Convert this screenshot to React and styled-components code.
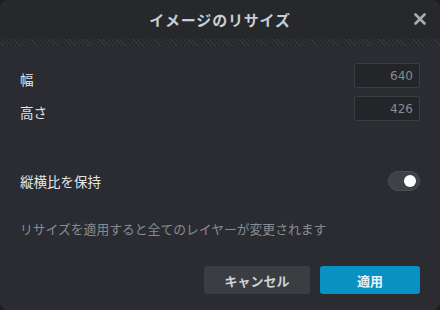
import React, { useState } from 'react';
import styled, { createGlobalStyle } from 'styled-components';

const GlobalStyle = createGlobalStyle`
  html, body {
    margin: 0;
    padding: 0;
    background: #1c1d20;
    font-family: 'Noto Sans CJK JP', 'Noto Sans', sans-serif;
  }
`;

const Dialog = styled.div`
  width: 440px;
  height: 310px;
  background: #2a2c31;
  border-radius: 8px;
  overflow: hidden;
  display: flex;
  flex-direction: column;
  box-sizing: border-box;
`;

const Header = styled.div`
  height: 39px;
  background: #26282c;
  display: flex;
  align-items: center;
  justify-content: center;
  position: relative;
`;

const Title = styled.h2`
  margin: 0;
  font-size: 15px;
  font-weight: 700;
  color: #c8ced6;
  letter-spacing: 0.8px;
`;

const CloseButton = styled.button`
  position: absolute;
  right: 11px;
  top: 10px;
  width: 18px;
  height: 18px;
  padding: 0;
  border: none;
  background: none;
  cursor: pointer;
  display: flex;
  align-items: center;
  justify-content: center;
`;

const Hatch = styled.div`
  height: 7px;
  background: repeating-linear-gradient(
    45deg,
    #26282c 0px,
    #26282c 2px,
    #34373c 2px,
    #34373c 3px
  );
`;

const Body = styled.div`
  flex: 1;
  display: flex;
  flex-direction: column;
  padding: 17px 20px 16px 20px;
`;

const FieldRow = styled.div`
  display: flex;
  align-items: flex-start;
  justify-content: space-between;
  margin-bottom: 8px;
`;

const Label = styled.span`
  font-size: 13.5px;
  line-height: 18px;
  color: #e4e6ea;
  padding-top: ${(p) => (p.low ? '7px' : '0')};
`;

const NumberInput = styled.input`
  width: 66px;
  height: 25px;
  box-sizing: border-box;
  background: #232529;
  border: 1px solid #3a3d42;
  border-radius: 2px;
  color: #878c93;
  font-family: 'DejaVu Sans', sans-serif;
  font-size: 12px;
  text-align: right;
  padding: 0 6px;
  outline: none;
`;

const ToggleRow = styled(FieldRow)`
  align-items: center;
  margin-top: 42px;
  margin-bottom: 0;
`;

const Toggle = styled.button`
  width: 32px;
  height: 20px;
  padding: 0;
  border-radius: 10px;
  border: 1px solid #4a4d53;
  background: #3e4146;
  position: relative;
  cursor: pointer;
`;

const Knob = styled.span`
  position: absolute;
  top: 3px;
  left: ${(p) => (p.on ? '15px' : '3px')};
  width: 12px;
  height: 12px;
  border-radius: 50%;
  background: #ffffff;
`;

const Note = styled.p`
  margin: 28px 0 0 0;
  font-size: 12.8px;
  color: #878c93;
`;

const Footer = styled.div`
  margin-top: auto;
  display: flex;
  justify-content: flex-end;
  gap: 10px;
`;

const Button = styled.button`
  height: 28px;
  width: ${(p) => (p.primary ? '100px' : '106px')};
  border: none;
  border-radius: 3px;
  background: ${(p) => (p.primary ? '#0891c2' : '#3a3d42')};
  color: ${(p) => (p.primary ? '#e8f4fa' : '#d0d3d8')};
  font-family: 'Noto Sans CJK JP', sans-serif;
  font-size: 13px;
  font-weight: 700;
  cursor: pointer;
`;

export default function App() {
  const [keep, setKeep] = useState(true);

  return (
    <>
      <GlobalStyle />
      <Dialog>
        <Header>
          <Title>イメージのリサイズ</Title>
          <CloseButton aria-label="close">
            <svg width="12" height="12" viewBox="0 0 12 12">
              <path d="M1.5 1.5 L10.5 10.5 M10.5 1.5 L1.5 10.5" stroke="#a9adb3" strokeWidth="2.6" strokeLinecap="round" />
            </svg>
          </CloseButton>
        </Header>
        <Hatch />
        <Body>
          <FieldRow>
            <Label low>幅</Label>
            <NumberInput defaultValue="640" />
          </FieldRow>
          <FieldRow>
            <Label low>高さ</Label>
            <NumberInput defaultValue="426" />
          </FieldRow>
          <ToggleRow>
            <Label>縦横比を保持</Label>
            <Toggle onClick={() => setKeep(!keep)}>
              <Knob on={keep ? 1 : 0} />
            </Toggle>
          </ToggleRow>
          <Note>リサイズを適用すると全てのレイヤーが変更されます</Note>
          <Footer>
            <Button>キャンセル</Button>
            <Button primary>適用</Button>
          </Footer>
        </Body>
      </Dialog>
    </>
  );
}
